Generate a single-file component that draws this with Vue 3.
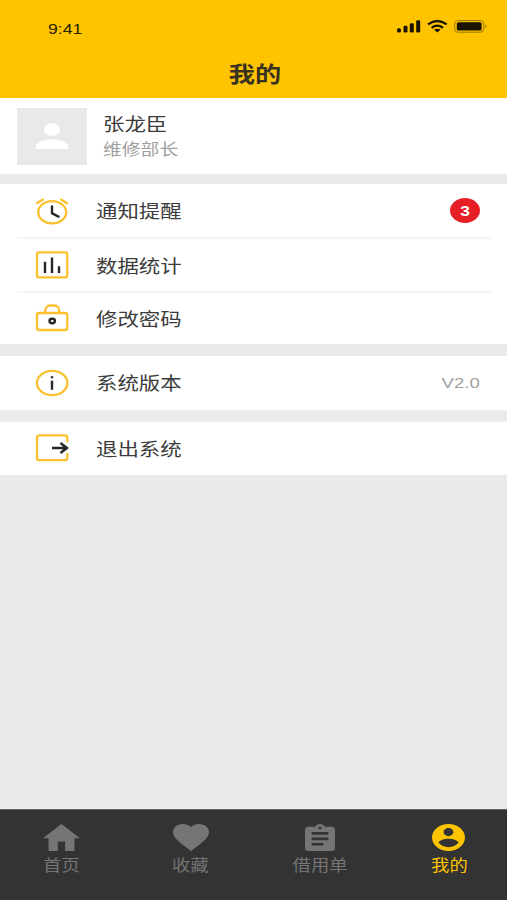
<script setup>
const groups = [
  [
    { icon: 'clock', label: '通知提醒', badge: 3 },
    { icon: 'chart', label: '数据统计' },
    { icon: 'lock', label: '修改密码' },
  ],
  [{ icon: 'info', label: '系统版本', value: 'V2.0' }],
  [{ icon: 'exit', label: '退出系统' }],
]

const tabs = [
  { label: '首页', w: 37, box: '2 3 20 17', d: 'M10 20v-6h4v6h5v-8h3L12 3 2 12h3v8z' },
  {
    label: '收藏', w: 36, box: '2 3 20 18.35',
    d: 'M12 21.35l-1.45-1.32C5.4 15.36 2 12.28 2 8.5 2 5.42 4.42 3 7.5 3c1.74 0 3.41.81 4.5 2.09C13.09 3.81 14.76 3 16.5 3 19.58 3 22 5.42 22 8.5c0 3.78-3.4 6.86-8.55 11.54L12 21.35z',
  },
  {
    label: '借用单', w: 30, box: '3 1 18 20',
    d: 'M19 3h-4.18C14.4 1.84 13.3 1 12 1c-1.3 0-2.4.84-2.82 2H5c-1.1 0-2 .9-2 2v14c0 1.1.9 2 2 2h14c1.1 0 2-.9 2-2V5c0-1.1-.9-2-2-2zm-7 0c.55 0 1 .45 1 1s-.45 1-1 1-1-.45-1-1 .45-1 1-1zm2 14H7v-2h7v2zm3-4H7v-2h10v2zm0-4H7V7h10v2z',
  },
  {
    label: '我的', w: 33, box: '2 2 20 20', active: true,
    d: 'M12 2C6.48 2 2 6.48 2 12s4.48 10 10 10 10-4.48 10-10S17.52 2 12 2zm0 3c1.66 0 3 1.34 3 3s-1.34 3-3 3-3-1.34-3-3 1.34-3 3-3zm0 14.2c-2.5 0-4.71-1.28-6-3.22.03-1.99 4-3.08 6-3.08 1.99 0 5.97 1.09 6 3.08-1.29 1.94-3.5 3.22-6 3.22z',
  },
]
</script>

<template>
  <div class="screen">
    <header class="header">
      <div class="status">
        <span class="time">9:41</span>
        <svg class="indicators" width="92" height="16" viewBox="396 18 92 16">
          <rect x="397" y="28.2" width="4" height="4.3" rx="1.5" />
          <rect x="403.5" y="25.8" width="4" height="6.7" rx="1.3" />
          <rect x="409.8" y="23.2" width="4" height="9.3" rx="1.3" />
          <rect x="416.2" y="20.2" width="4" height="12.3" rx="1.3" />
          <g fill="none" stroke="#1a1400" stroke-width="2.3">
            <path d="M428 24.4Q437.3 17.6 446.6 24.4" />
            <path d="M431.6 27.8Q437.3 23.5 443 27.8" />
          </g>
          <path d="M434 29.8Q437.3 27.6 440.6 29.8L437.3 32.4Z" />
          <rect x="454.7" y="20.6" width="29" height="11.6" rx="3" fill="none" stroke="#8f7000" stroke-width="0.9" />
          <rect x="456.8" y="22.3" width="24.8" height="8.2" rx="1.5" />
          <path d="M485.3 24.5Q487.6 26.4 485.3 28.3Z" fill="#8f7000" />
        </svg>
      </div>
      <h1 class="title"><span class="wide">我的</span></h1>
    </header>

    <section class="profile">
      <div class="avatar">
        <svg width="32" height="26" viewBox="4 4 16 16" preserveAspectRatio="none">
          <path fill="#fff" d="M12 12c2.21 0 4-1.79 4-4s-1.79-4-4-4-4 1.79-4 4 1.79 4 4 4zm0 2c-2.67 0-8 1.34-8 4v2h16v-2c0-2.66-5.33-4-8-4z" />
        </svg>
      </div>
      <div class="person">
        <span class="wide name">张龙臣</span>
        <span class="wide role">维修部长</span>
      </div>
    </section>

    <section v-for="(group, i) in groups" :key="i" class="group">
      <div v-for="item in group" :key="item.label" class="row">
        <svg class="row-icon" width="36" height="30" viewBox="0 0 36 30">
          <template v-if="item.icon === 'clock'">
            <g class="gold">
              <ellipse cx="18.2" cy="16.3" rx="14" ry="11.1" />
              <path d="M3.2 7.1L9 3.6M27 3.6L33 7.3" />
            </g>
            <path class="ink" d="M18 10.5V17.3L24.5 20.6" />
          </template>
          <template v-else-if="item.icon === 'chart'">
            <rect class="gold" x="3" y="2.4" width="30.3" height="25" rx="2.2" />
            <path class="ink butt" d="M11 11.7V23M18 7.5V23M25 16.2V23" />
          </template>
          <template v-else-if="item.icon === 'lock'">
            <g class="gold">
              <rect x="3" y="10" width="30.3" height="17" rx="2.2" />
              <path d="M11.3 10V7.8C11.3 4.6 13.5 2.5 16 2.5H20.5C23 2.5 25.2 4.6 25.2 7.8V10" />
            </g>
            <ellipse class="ink" cx="18.2" cy="18" rx="2.7" ry="2.2" />
          </template>
          <template v-else-if="item.icon === 'info'">
            <ellipse class="gold" cx="18.2" cy="15" rx="15.2" ry="12.2" />
            <path class="ink butt" d="M18 8.2V10.3M18 12.7V21.7" />
          </template>
          <template v-else>
            <path class="gold" d="M33.3 8.5V4.5Q33.3 2.3 30.8 2.3H5.5Q3 2.3 3 4.5V25Q3 27.2 5.5 27.2H30.8Q33.3 27.2 33.3 25V21" />
            <path class="ink butt" d="M18 15H33M26.5 10L33 15L26.5 20" />
          </template>
        </svg>
        <span class="wide label">{{ item.label }}</span>
        <span v-if="item.badge" class="badge"><span class="wide-center">{{ item.badge }}</span></span>
        <span v-if="item.value" class="value">{{ item.value }}</span>
      </div>
    </section>

    <nav class="tabs">
      <div v-for="tab in tabs" :key="tab.label" class="tab" :class="{ active: tab.active }">
        <svg :width="tab.w" height="27" :viewBox="tab.box" preserveAspectRatio="none">
          <path fill="currentColor" :d="tab.d" />
        </svg>
        <span class="tab-label">{{ tab.label }}</span>
      </div>
    </nav>
  </div>
</template>

<style>
body {
  margin: 0;
  background: #eaeaea;
}
</style>

<style scoped>
.screen {
  box-sizing: border-box;
  width: 507px;
  height: 900px;
  display: flex;
  flex-direction: column;
  overflow: hidden;
  background: #eaeaea;
  color: #3c3c3c;
  font-family: "Liberation Sans", "Noto Sans CJK SC", sans-serif;
}
.wide {
  display: inline-block;
  transform: scaleX(1.19);
  transform-origin: left center;
  white-space: nowrap;
}
.header {
  height: 98px;
  flex: none;
  background: #ffc400;
}
.status {
  display: flex;
  justify-content: space-between;
  height: 50px;
  padding: 18px 19px 0 48px;
  box-sizing: border-box;
}
.time {
  font-size: 15.5px;
  line-height: 21px;
  color: #2b2200;
  transform: scaleX(1.14);
  transform-origin: left center;
}
.indicators {
  fill: #1a1400;
}
.title {
  margin: 0;
  padding: 1px 0 0 3px;
  text-align: center;
  font-size: 22px;
  line-height: 48px;
  font-weight: 700;
  color: #3a3220;
}
.title .wide {
  transform-origin: center;
}
.profile {
  display: flex;
  height: 76px;
  flex: none;
  background: #fff;
  padding: 9.5px 17px 0;
  box-sizing: border-box;
  gap: 16px;
}
.avatar {
  width: 70px;
  height: 57px;
  box-sizing: border-box;
  background: #e9e9e9;
  display: flex;
  align-items: center;
  justify-content: center;
}
.person {
  display: flex;
  flex-direction: column;
  align-items: flex-start;
  padding-top: 4.5px;
}
.name {
  font-size: 18px;
  line-height: 26px;
}
.role {
  font-size: 15.8px;
  line-height: 24px;
  color: #a0a0a0;
}
.group {
  flex: none;
  background: #fff;
  margin-top: 12px;
}
.profile + .group {
  margin-top: 10px;
}
.row {
  display: flex;
  align-items: center;
  height: 53.4px;
  margin: 0 16px 0 17px;
  padding: 0 11px 0 17px;
  box-sizing: border-box;
}
.row + .row {
  border-top: 2px solid #f5f5f5;
}
.row-icon {
  flex: none;
  margin-right: 26px;
}
.gold {
  fill: none;
  stroke: #fbc02d;
  stroke-width: 2.3;
  stroke-linecap: round;
}
.ink {
  fill: none;
  stroke: #262626;
  stroke-width: 2.4;
  stroke-linecap: round;
}
.ink.butt {
  stroke-linecap: butt;
}
.label {
  padding-top: 3px;
  font-size: 18px;
  line-height: 28px;
}
.badge {
  margin-left: auto;
  width: 30px;
  height: 25px;
  border-radius: 50%;
  background: #e61e25;
  color: #fff;
  font-size: 14.5px;
  font-weight: 700;
  line-height: 26px;
  text-align: center;
}
.wide-center {
  display: inline-block;
  transform: scaleX(1.2);
}
.value {
  margin-left: auto;
  font-size: 15.5px;
  color: #a0a0a0;
  transform: scaleX(1.2);
  transform-origin: right center;
}
.tabs {
  margin-top: auto;
  height: 91px;
  flex: none;
  box-sizing: border-box;
  display: flex;
  justify-content: space-between;
  padding: 13.5px 29px 0 32px;
  border-top: 1px solid #666;
  background: #333;
}
.tab {
  width: 58px;
  display: flex;
  flex-direction: column;
  align-items: center;
  color: #757575;
}
.tab:nth-child(2),
.tab:nth-child(3) {
  padding-left: 1px;
}
.tab.active {
  color: #ffc400;
}
.tab-label {
  font-size: 15.4px;
  line-height: 24px;
  margin-top: 3.5px;
  white-space: nowrap;
  transform: scaleX(1.19);
}
</style>
